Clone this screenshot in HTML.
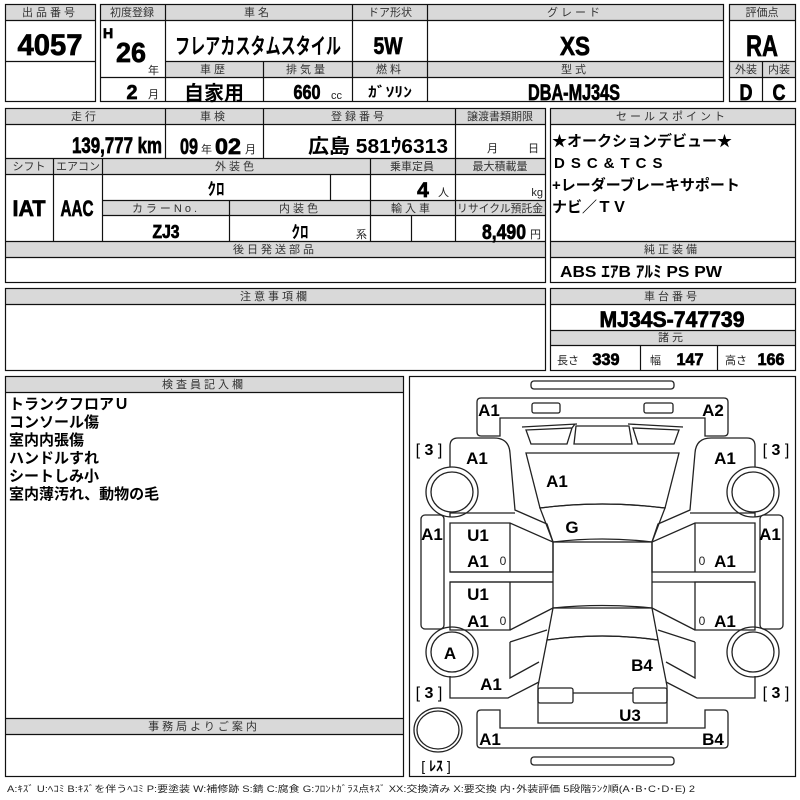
<!DOCTYPE html>
<html><head><meta charset="utf-8"><style>
html,body{margin:0;padding:0;background:#fff;width:800px;height:800px;overflow:hidden}
svg{display:block}
.h{font:11px "Liberation Sans","Noto Sans CJK JP",sans-serif;fill:#333;text-anchor:middle;letter-spacing:3px}
.hs{font:11px "Liberation Sans","Noto Sans CJK JP",sans-serif;fill:#333;text-anchor:middle}
.v{font-family:"Liberation Sans Narrow","Liberation Sans","Noto Sans CJK JP",sans-serif;font-weight:bold;fill:#000;text-anchor:middle;stroke:#000;stroke-width:0.7}
.st{text-anchor:start}
.j{font-family:"Liberation Sans","Noto Sans CJK JP",sans-serif;font-weight:bold;fill:#000}
.s{font:11px "Liberation Sans","Noto Sans CJK JP",sans-serif;fill:#222}
.c{font-family:"Liberation Sans","Noto Sans CJK JP",sans-serif;font-weight:bold;font-size:17px;fill:#000;text-anchor:middle}
.br{font-family:"Liberation Sans","Noto Sans CJK JP",sans-serif;font-size:16px;fill:#000;text-anchor:middle}
</style></head><body>
<svg width="800" height="800" viewBox="0 0 800 800" xmlns="http://www.w3.org/2000/svg">
<g fill="#d9d9d9" stroke="none">
<rect x="5" y="4" width="90" height="16"/>
<rect x="100" y="4" width="623" height="16"/>
<rect x="165" y="61" width="558" height="16"/>
<rect x="729" y="4" width="66" height="16"/>
<rect x="729" y="61" width="66" height="16"/>
<rect x="5" y="108" width="540" height="16"/>
<rect x="5" y="158" width="540" height="16"/>
<rect x="102" y="200" width="443" height="15"/>
<rect x="5" y="241" width="540" height="16"/>
<rect x="550" y="108" width="245" height="16"/>
<rect x="550" y="241" width="245" height="16"/>
<rect x="5" y="288" width="540" height="16"/>
<rect x="550" y="288" width="245" height="16"/>
<rect x="550" y="330" width="245" height="15"/>
<rect x="5" y="376" width="398" height="16"/>
<rect x="5" y="718" width="398" height="16"/>
</g>
<g fill="none" stroke="#111" stroke-width="1.2">
<rect x="5.5" y="4.5" width="90" height="97"/>
<line x1="5" y1="20.5" x2="95" y2="20.5"/><line x1="5" y1="61.5" x2="95" y2="61.5"/>
<rect x="100.5" y="4.5" width="623" height="97"/>
<line x1="100" y1="20.5" x2="723" y2="20.5"/>
<line x1="165.5" y1="4" x2="165.5" y2="101"/><line x1="352.5" y1="4" x2="352.5" y2="101"/><line x1="427.5" y1="4" x2="427.5" y2="101"/><line x1="263.5" y1="61" x2="263.5" y2="101"/>
<line x1="165" y1="61.5" x2="723" y2="61.5"/><line x1="100" y1="77.5" x2="723" y2="77.5"/>
<rect x="729.5" y="4.5" width="66" height="97"/>
<line x1="729" y1="20.5" x2="795" y2="20.5"/><line x1="729" y1="61.5" x2="795" y2="61.5"/><line x1="729" y1="77.5" x2="795" y2="77.5"/><line x1="762.5" y1="61" x2="762.5" y2="101"/>
<rect x="5.5" y="108.5" width="540" height="174"/>
<line x1="5" y1="124.5" x2="545" y2="124.5"/><line x1="5" y1="158.5" x2="545" y2="158.5"/><line x1="5" y1="174.5" x2="545" y2="174.5"/>
<line x1="165.5" y1="108" x2="165.5" y2="158"/><line x1="263.5" y1="108" x2="263.5" y2="158"/><line x1="455.5" y1="108" x2="455.5" y2="241"/>
<line x1="53.5" y1="158" x2="53.5" y2="241"/><line x1="102.5" y1="158" x2="102.5" y2="241"/><line x1="370.5" y1="158" x2="370.5" y2="241"/>
<line x1="330.5" y1="174" x2="330.5" y2="200"/><line x1="229.5" y1="200" x2="229.5" y2="241"/><line x1="411.5" y1="215" x2="411.5" y2="241"/>
<line x1="102" y1="200.5" x2="545" y2="200.5"/><line x1="102" y1="215.5" x2="545" y2="215.5"/>
<line x1="5" y1="241.5" x2="545" y2="241.5"/><line x1="5" y1="257.5" x2="545" y2="257.5"/>
<rect x="550.5" y="108.5" width="245" height="174"/>
<line x1="550" y1="124.5" x2="795" y2="124.5"/><line x1="550" y1="241.5" x2="795" y2="241.5"/><line x1="550" y1="257.5" x2="795" y2="257.5"/>
<rect x="5.5" y="288.5" width="540" height="82"/><line x1="5" y1="304.5" x2="545" y2="304.5"/>
<rect x="550.5" y="288.5" width="245" height="82"/><line x1="550" y1="304.5" x2="795" y2="304.5"/><line x1="550" y1="330.5" x2="795" y2="330.5"/><line x1="550" y1="345.5" x2="795" y2="345.5"/>
<line x1="640.5" y1="345" x2="640.5" y2="370"/><line x1="717.5" y1="345" x2="717.5" y2="370"/>
<rect x="5.5" y="376.5" width="398" height="400"/><line x1="5" y1="392.5" x2="403" y2="392.5"/><line x1="5" y1="718.5" x2="403" y2="718.5"/><line x1="5" y1="734.5" x2="403" y2="734.5"/>
<rect x="409.5" y="376.5" width="386" height="400"/>
</g>
<text class="h" x="50" y="16">出品番号</text>
<text class="hs" x="132" y="16">初度登録</text>
<text class="h" x="258" y="16">車名</text>
<text class="hs" x="390" y="16">ドア形状</text>
<text class="h" x="575" y="16">グレード</text>
<text class="hs" x="762" y="16">評価点</text>
<text class="h" x="214" y="73">車歴</text>
<text class="h" x="307" y="73">排気量</text>
<text class="h" x="390" y="73">燃料</text>
<text class="h" x="575" y="73">型式</text>
<text class="hs" x="746" y="73">外装</text>
<text class="hs" x="779" y="73">内装</text>
<text class="h" x="85" y="120">走行</text>
<text class="h" x="214" y="120">車検</text>
<text class="h" x="359" y="120">登録番号</text>
<text class="hs" x="500" y="120">譲渡書類期限</text>
<text class="hs" x="29" y="170">シフト</text>
<text class="hs" x="78" y="170">エアコン</text>
<text class="h" x="236" y="170">外装色</text>
<text class="hs" x="412" y="170">乗車定員</text>
<text class="hs" x="500" y="170">最大積載量</text>
<text class="h" x="166" y="212">カラーNo.</text>
<text class="h" x="300" y="212">内装色</text>
<text class="h" x="412" y="212">輸入車</text>
<text class="hs" x="500" y="212" textLength="86" lengthAdjust="spacingAndGlyphs">リサイクル預託金</text>
<text class="h" x="275" y="253">後日発送部品</text>
<text class="h" x="672" y="120">セールスポイント</text>
<text class="h" x="672" y="253">純正装備</text>
<text class="h" x="275" y="300">注意事項欄</text>
<text class="h" x="672" y="300">車台番号</text>
<text class="h" x="672" y="341">諸元</text>
<text class="h" x="204" y="388">検査員記入欄</text>
<text class="h" x="204" y="730">事務局よりご案内</text>
<text class="v" x="50" y="55" font-size="30" textLength="65" lengthAdjust="spacingAndGlyphs">4057</text>
<text class="v" x="108" y="38" font-size="14">H</text>
<text class="v" x="131" y="62" font-size="28" textLength="30" lengthAdjust="spacingAndGlyphs">26</text>
<text class="s" x="148" y="74">年</text>
<text class="v" x="132" y="99" font-size="20" textLength="11" lengthAdjust="spacingAndGlyphs">2</text>
<text class="s" x="148" y="98">月</text>
<text class="j" x="258" y="54" font-size="22" text-anchor="middle" textLength="166" lengthAdjust="spacingAndGlyphs">フレアカスタムスタイル</text>
<text class="v" x="388" y="54" font-size="24" textLength="29" lengthAdjust="spacingAndGlyphs">5W</text>
<text class="v" x="575" y="55" font-size="26" textLength="30" lengthAdjust="spacingAndGlyphs">XS</text>
<text class="v" x="762" y="56" font-size="30" textLength="32" lengthAdjust="spacingAndGlyphs">RA</text>
<text class="j" x="214" y="100" font-size="20" text-anchor="middle" textLength="60" lengthAdjust="spacingAndGlyphs">自家用</text>
<text class="v" x="307" y="99" font-size="20" textLength="27" lengthAdjust="spacingAndGlyphs">660</text>
<text class="s" x="331" y="99">cc</text>
<text class="j" x="390" y="97" font-size="14" text-anchor="middle" textLength="44" lengthAdjust="spacingAndGlyphs">ｶﾞｿﾘﾝ</text>
<text class="v" x="574" y="100" font-size="22" textLength="92" lengthAdjust="spacingAndGlyphs">DBA-MJ34S</text>
<text class="v" x="746" y="100" font-size="22" textLength="13" lengthAdjust="spacingAndGlyphs">D</text>
<text class="v" x="779" y="100" font-size="22" textLength="13" lengthAdjust="spacingAndGlyphs">C</text>
<text class="v st" x="72" y="153" font-size="22" textLength="90" lengthAdjust="spacingAndGlyphs">139,777 km</text>
<text class="v" x="189" y="154" font-size="22" textLength="18" lengthAdjust="spacingAndGlyphs">09</text>
<text class="s" x="201" y="153">年</text>
<text class="v" x="228" y="154" font-size="22" textLength="26" lengthAdjust="spacingAndGlyphs">02</text>
<text class="s" x="245" y="153">月</text>
<text class="j" x="378" y="153" font-size="20" text-anchor="middle" textLength="140" lengthAdjust="spacingAndGlyphs">広島 581ｳ6313</text>
<text class="s" x="487" y="152">月</text>
<text class="s" x="528" y="152">日</text>
<text class="v" x="29" y="216" font-size="22" textLength="33" lengthAdjust="spacingAndGlyphs">IAT</text>
<text class="v" x="77" y="216" font-size="22" textLength="33" lengthAdjust="spacingAndGlyphs">AAC</text>
<text class="j" x="216" y="195" font-size="17" text-anchor="middle">ｸﾛ</text>
<text class="v" x="423" y="197" font-size="21">4</text>
<text class="s" x="438" y="196">人</text>
<text class="s" x="543" y="196" text-anchor="end">kg</text>
<text class="v" x="166" y="238" font-size="18" textLength="27" lengthAdjust="spacingAndGlyphs">ZJ3</text>
<text class="j" x="300" y="238" font-size="17" text-anchor="middle">ｸﾛ</text>
<text class="s" x="356" y="238">系</text>
<text class="v st" x="482" y="239" font-size="21" textLength="44" lengthAdjust="spacingAndGlyphs">8,490</text>
<text class="s" x="530" y="238">円</text>
<g class="j" font-size="15">
<text x="552" y="146">★オークションデビュー★</text>
<text x="554" y="168" letter-spacing="6">DSC&amp;TCS</text>
<text x="552" y="190">+レーダーブレーキサポート</text>
<text x="552" y="212">ナビ／ＴＶ</text>
</g>
<text class="j" x="560" y="277" font-size="16" textLength="162" lengthAdjust="spacingAndGlyphs">ABS ｴｱB ｱﾙﾐ PS PW</text>
<text class="v" x="672" y="327" font-size="22" textLength="145" lengthAdjust="spacingAndGlyphs">MJ34S-747739</text>
<text class="s" x="557" y="364">長さ</text>
<text class="v" x="606" y="365" font-size="17" textLength="27" lengthAdjust="spacingAndGlyphs">339</text>
<text class="s" x="650" y="364">幅</text>
<text class="v" x="690" y="365" font-size="17" textLength="27" lengthAdjust="spacingAndGlyphs">147</text>
<text class="s" x="725" y="364">高さ</text>
<text class="v" x="771" y="365" font-size="17" textLength="27" lengthAdjust="spacingAndGlyphs">166</text>
<g class="j" font-size="15">
<text x="9" y="409">トランクフロアＵ</text>
<text x="9" y="427">コンソール傷</text>
<text x="9" y="445">室内内張傷</text>
<text x="9" y="463">ハンドルすれ</text>
<text x="9" y="481">シートしみ小</text>
<text x="9" y="499">室内薄汚れ、動物の毛</text>
</g>
<text class="s" x="7" y="792" style="font-size:9px" textLength="688" lengthAdjust="spacingAndGlyphs">A:ｷｽﾞ U:ﾍｺﾐ B:ｷｽﾞを伴うﾍｺﾐ P:要塗装 W:補修跡 S:錆 C:腐食 G:ﾌﾛﾝﾄｶﾞﾗｽ点ｷｽﾞ XX:交換済み X:要交換 内･外装評価 5段階ﾗﾝｸ順(A･B･C･D･E) 2</text>
<g fill="none" stroke="#222" stroke-width="1.3">
<rect x="531" y="381" width="143" height="8" rx="3"/>
<rect x="531" y="757" width="143" height="8" rx="3"/>
<path d="M500,436 L481,436 Q477,436 477,432 L477,402 Q477,398 481,398 L724,398 Q728,398 728,402 L728,432 Q728,436 724,436 L705,436 L705,418 L500,418 Z"/>
<rect x="532" y="403" width="28" height="10" rx="2"/>
<rect x="644" y="403" width="29" height="10" rx="2"/>
<path d="M500,710 L481,710 Q477,710 477,714 L477,744 Q477,748 481,748 L724,748 Q728,748 728,744 L728,714 Q728,710 724,710 L705,710 L705,728 L500,728 Z"/>
<path d="M522,427 L577,424 M526,430 L572,428 L567,444 L531,444 Z M572,428 L575,424"/>
<path d="M683,427 L628,424 M679,430 L633,428 L638,444 L674,444 Z"/>
<path d="M574,444 L576,426 L629,426 L632,444 Z" />
<path d="M526,453 L679,453 L665,508 Q602,500 540,508 Z"/>
<path d="M540,508 Q602,500 665,508 L652,542 Q602,536 553,542 Z"/>
<rect x="553" y="542" width="99" height="66"/>
<path d="M553,608 Q602,603 652,608 L658,640 Q602,632 547,640 Z"/>
<path d="M547,640 Q602,632 658,640 L667,686 L667,723 L538,723 L538,686 Z"/>
<rect x="538" y="688" width="35" height="15" rx="2"/>
<rect x="633" y="688" width="34" height="15" rx="2"/>
<line x1="573" y1="693" x2="633" y2="693"/>
<path d="M450,467 L450,446 Q450,438 458,438 L494,438 Q509,438 510,453 L515,510 L547,524 L553,542"/>
<path d="M450,517 L450,513 L515,513"/>
<rect x="421" y="515" width="23" height="114" rx="4"/>
<path d="M450,523 L510,523 L553,542 L553,572 L450,572 Z M510,523 L510,572"/>
<path d="M450,572 L553,572 M450,582 L553,582"/>
<path d="M450,582 L510,582 L510,630 L450,630 Z M510,630 L553,608 M510,582 L553,582"/>
<path d="M510,642 L547,630 M510,642 L510,678 L539,662 M450,676 L450,698 L508,698 L539,682"/>
<path d="M755,467 L755,446 Q755,438 747,438 L711,438 Q696,438 695,453 L690,510 L658,524 L652,542"/>
<path d="M755,517 L755,513 L690,513"/>
<rect x="760" y="515" width="23" height="114" rx="4"/>
<path d="M755,523 L695,523 L652,542 L652,572 L755,572 Z M695,523 L695,572"/>
<path d="M652,582 L755,582"/>
<path d="M755,582 L695,582 L695,630 L755,630 Z M695,630 L652,608"/>
<path d="M695,642 L658,630 M695,642 L695,678 L666,662 M755,676 L755,698 L697,698 L666,682"/>
<ellipse cx="452" cy="492" rx="26" ry="25"/><ellipse cx="452" cy="492" rx="21" ry="20"/>
<ellipse cx="452" cy="652" rx="26" ry="25"/><ellipse cx="452" cy="652" rx="21" ry="20"/>
<ellipse cx="753" cy="492" rx="26" ry="25"/><ellipse cx="753" cy="492" rx="21" ry="20"/>
<ellipse cx="753" cy="652" rx="26" ry="25"/><ellipse cx="753" cy="652" rx="21" ry="20"/>
<ellipse cx="438" cy="730" rx="24" ry="22"/><ellipse cx="438" cy="730" rx="21" ry="19"/>
</g>
<g class="c">
<text x="489" y="416">A1</text><text x="713" y="416">A2</text>
<text x="477" y="464">A1</text><text x="725" y="464">A1</text>
<text x="557" y="487">A1</text>
<text x="572" y="533">G</text>
<text x="432" y="540">A1</text><text x="770" y="540">A1</text>
<text x="478" y="541">U1</text><text x="478" y="567">A1</text>
<text x="478" y="600">U1</text><text x="478" y="627">A1</text>
<text x="725" y="567">A1</text><text x="725" y="627">A1</text>
<text x="450" y="659">A</text>
<text x="642" y="671">B4</text>
<text x="491" y="690">A1</text>
<text x="630" y="721">U3</text>
<text x="490" y="745">A1</text><text x="713" y="745">B4</text>
</g>
<g class="s" style="font-size:12px">
<text x="503" y="565" text-anchor="middle">0</text><text x="503" y="625" text-anchor="middle">0</text>
<text x="702" y="565" text-anchor="middle">0</text><text x="702" y="625" text-anchor="middle">0</text>
</g>
<g class="br">
<text x="429" y="455">[ <tspan font-weight="bold">3</tspan> ]</text>
<text x="776" y="455">[ <tspan font-weight="bold">3</tspan> ]</text>
<text x="429" y="698">[ <tspan font-weight="bold">3</tspan> ]</text>
<text x="776" y="698">[ <tspan font-weight="bold">3</tspan> ]</text>
<text x="436" y="771" font-size="14">[ <tspan font-weight="bold">ﾚｽ</tspan> ]</text>
</g>
</svg>
</body></html>
